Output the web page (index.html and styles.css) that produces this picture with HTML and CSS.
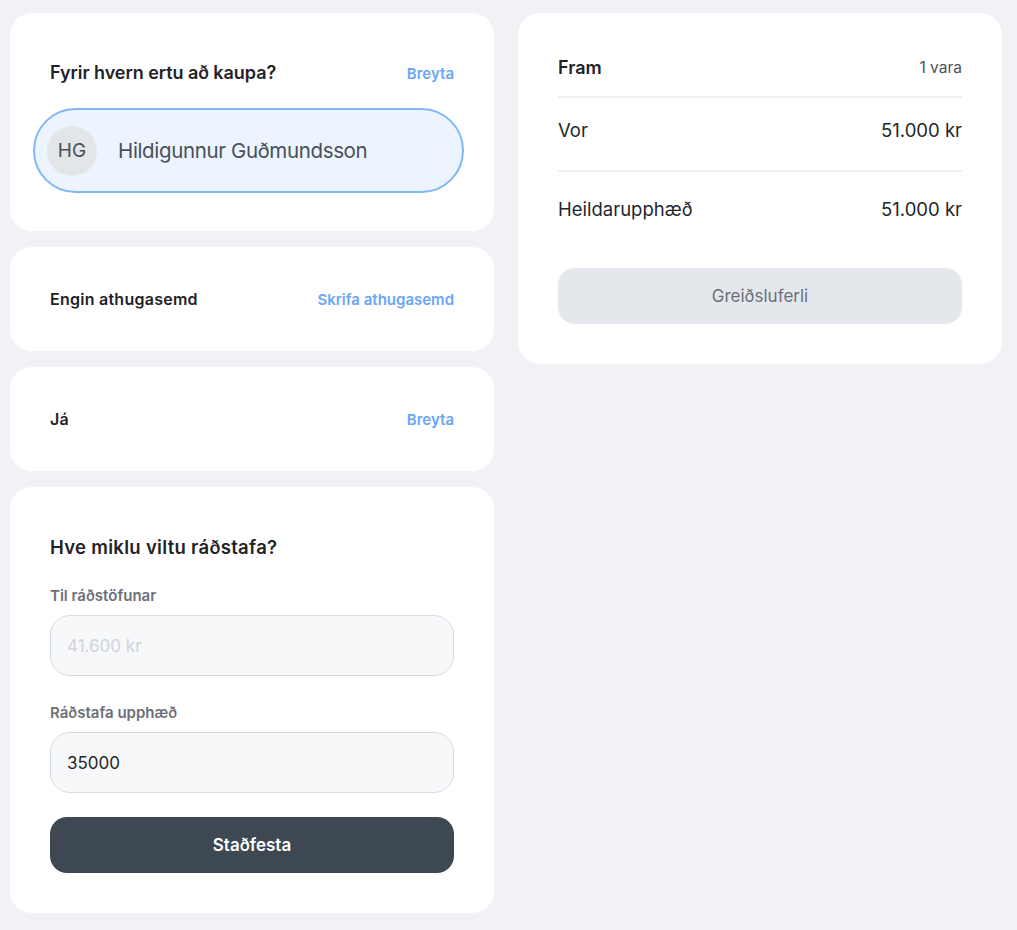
FILE: index.html
```html
<!DOCTYPE html>
<html lang="is">
<head>
<meta charset="utf-8">
<title>Karfa</title>
<link rel="stylesheet" href="styles.css">
</head>
<body>
<div class="page">
  <div class="col">
    <section class="card card-buyer">
      <div class="row">
        <h2 class="title">Fyrir hvern ertu að kaupa?</h2>
        <a class="link">Breyta</a>
      </div>
      <div class="pill">
        <div class="avatar">HG</div>
        <div class="name">Hildigunnur Guðmundsson</div>
      </div>
    </section>
    <section class="card card-small">
      <div class="row">
        <span class="label-strong">Engin athugasemd</span>
        <a class="link">Skrifa athugasemd</a>
      </div>
    </section>
    <section class="card card-small">
      <div class="row">
        <span class="label-strong">Já</span>
        <a class="link">Breyta</a>
      </div>
    </section>
    <section class="card card-form">
      <h2 class="title title-form">Hve miklu viltu ráðstafa?</h2>
      <label class="field-label first">Til ráðstöfunar</label>
      <div class="input disabled">41.600 kr</div>
      <label class="field-label">Ráðstafa upphæð</label>
      <div class="input">35000</div>
      <button class="btn-dark">Staðfesta</button>
    </section>
  </div>
  <div class="col">
    <section class="card card-summary">
      <div class="sum-head">
        <span class="sum-title">Fram</span>
        <span class="sum-count">1 vara</span>
      </div>
      <div class="sum-row sum-item">
        <span>Vor</span>
        <span>51.000 kr</span>
      </div>
      <div class="sum-row sum-total">
        <span>Heildarupphæð</span>
        <span>51.000 kr</span>
      </div>
      <button class="btn-light">Greiðsluferli</button>
    </section>
  </div>
</div>
</body>
</html>
```
FILE: styles.css
```css
* { box-sizing: border-box; }
html, body { margin: 0; padding: 0; }
body {
  background: #f1f2f6;
  font-family: Inter, "Open Sans", "Liberation Sans", sans-serif;
  color: #1f2328;
  width: 1017px;
  height: 930px;
  overflow: hidden;
}
.page {
  display: flex;
  gap: 24px;
  padding: 13px 0 0 10px;
}
.col {
  width: 484px;
  display: flex;
  flex-direction: column;
  gap: 16px;
}
.card {
  background: #fff;
  border-radius: 22px;
  padding: 48px 40px 40px;
}
.row {
  display: flex;
  justify-content: space-between;
  align-items: center;
  height: 24px;
}
.title {
  margin: 0;
  font-size: 18px;
  font-weight: 600;
  line-height: 24px;
  color: #1f2328;
  letter-spacing: -0.05px;
}
.title-form { font-size: 18.5px; letter-spacing: 0.3px; }
.link {
  color: #6aa6f7;
  font-size: 15px;
  font-weight: 600;
  cursor: pointer;
}
.card-buyer { padding-bottom: 38px; }
.pill {
  margin: 23px -10px 0 -17px;
  height: 85px;
  border: 2.5px solid #80b7f6;
  border-radius: 43px;
  background: #ebf4ff;
  display: flex;
  align-items: center;
  padding-left: 12px;
}
.avatar {
  width: 50px;
  height: 50px;
  border-radius: 50%;
  background: #e3e6e9;
  color: #4b5058;
  display: flex;
  align-items: center;
  justify-content: center;
  font-size: 19px;
}
.name {
  margin-left: 21px;
  font-size: 20.5px;
  color: #4a4f58;
  letter-spacing: -0.35px;
}
.card-small { padding: 40px; }
.label-strong {
  font-size: 16px;
  font-weight: 600;
  color: #1f2328;
  letter-spacing: 0.25px;
}
.card-form .title { margin-bottom: 27px; }
.field-label {
  display: block;
  font-size: 15px;
  font-weight: 600;
  line-height: 20px;
  color: #6b7078;
  margin-bottom: 9px;
}
.input {
  height: 61px;
  border: 1px solid #d5dae2;
  border-radius: 20px;
  background: #f7f8fa;
  padding: 0 16px;
  display: flex;
  align-items: center;
  font-size: 17px;
  color: #22262b;
  margin-bottom: 27px;
}
.input.disabled { color: #d0d4da; }
.card-form .input:last-of-type { margin-bottom: 24px; }
.btn-dark {
  display: block;
  width: 100%;
  height: 56px;
  border: 0;
  border-radius: 17px;
  background: #3d4852;
  color: #fff;
  font-family: inherit;
  font-size: 17px;
  font-weight: 600;
}
.card-summary { padding: 40px; }
.sum-head {
  display: flex;
  justify-content: space-between;
  align-items: center;
  height: 28px;
  border-bottom: 2px solid #eff1f4;
  box-sizing: content-box;
  padding-bottom: 15px;
}
.sum-title { font-size: 18px; font-weight: 600; color: #1f2328; }
.sum-count { font-size: 15.5px; color: #4d5259; }
.sum-row {
  display: flex;
  justify-content: space-between;
  align-items: center;
  font-size: 18.5px;
  color: #23272c;
}
.sum-item {
  height: 74px;
  padding-bottom: 8px;
  border-bottom: 2px solid #eff1f4;
}
.sum-total {
  height: 73px;
}
.btn-light {
  display: block;
  width: 100%;
  margin-top: 23px;
  height: 56px;
  border: 0;
  border-radius: 17px;
  background: #e4e8ec;
  color: #6b7078;
  font-family: inherit;
  font-size: 17px;
}
```
